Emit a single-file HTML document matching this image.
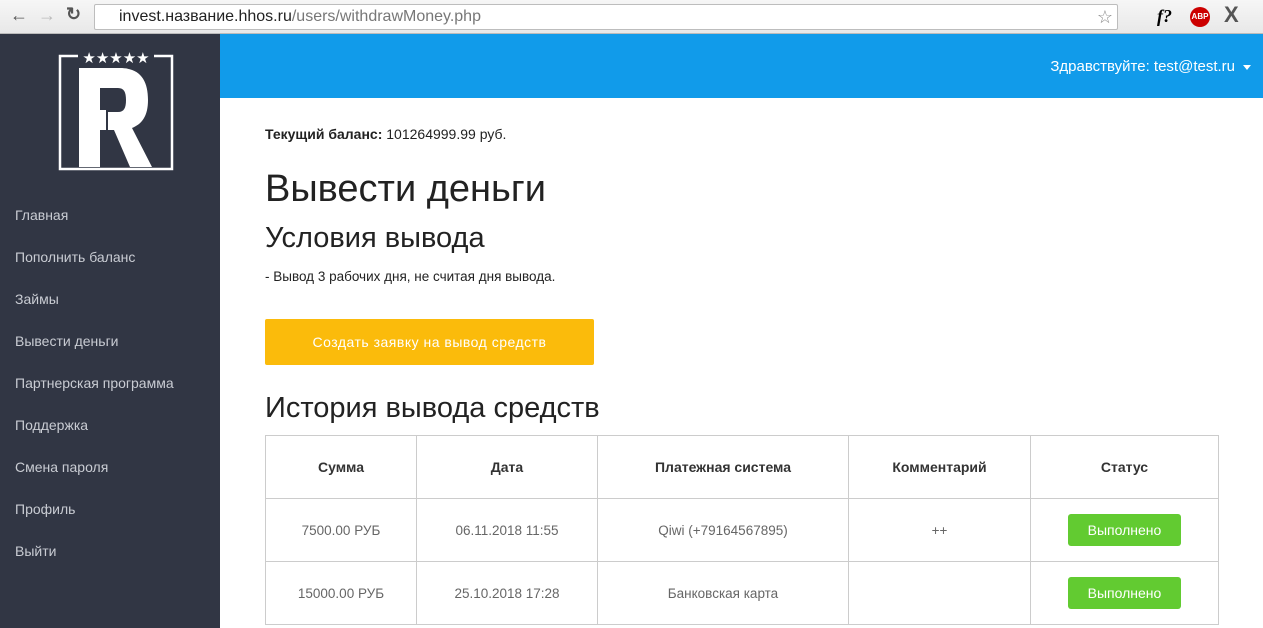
<!DOCTYPE html><html><head><meta charset="utf-8"><style>
*{margin:0;padding:0;box-sizing:border-box}
body{width:1263px;height:628px;overflow:hidden;font-family:"Liberation Sans",sans-serif;background:#fff;position:relative}
.bar{position:absolute;left:0;top:0;width:1263px;height:34px;background:linear-gradient(#f6f6f6,#e8e8e8);border-bottom:1px solid #bbb}
.url{position:absolute;left:94px;top:4px;width:1024px;height:26px;background:#fff;border:1px solid #bdbdbd;border-radius:2px;font-size:16px;line-height:24px;padding-left:24px;color:#222}
.url span{color:#777}
.side{position:absolute;left:0;top:34px;width:220px;height:594px;background:#313644}
.side a{position:absolute;left:15px;color:#c9ccd3;font-size:14px;text-decoration:none}
.head{position:absolute;left:220px;top:34px;width:1043px;height:64px;background:#119bea;color:#fff;font-size:15px}
.main{position:absolute;left:265px}
table{position:absolute;left:265px;top:435px;border-collapse:collapse;font-size:13.5px;color:#666}
td,th{border:1px solid #ccc;text-align:center;height:63px}
th{color:#333;font-size:14px}
.btn{display:inline-block;background:#62cb31;color:#fff;border-radius:3px;width:113px;height:32px;line-height:32px;font-size:14px}
</style></head><body>
<div class="bar">
<span style="position:absolute;left:10px;top:5px;font-size:18px;color:#555">←</span>
<span style="position:absolute;left:38px;top:5px;font-size:18px;color:#bbb">→</span>
<span style="position:absolute;left:66px;top:4px;font-size:18px;color:#555;font-weight:bold">↻</span>
<div class="url">invest.название.hhos.ru<span>/users/withdrawMoney.php</span><span style="position:absolute;right:4px;top:0;font-size:18px;color:#888">☆</span></div>
<span style="position:absolute;left:1157px;top:6px;font-size:18px;font-style:italic;font-family:'Liberation Serif';font-weight:bold">f?</span>
<span style="position:absolute;left:1190px;top:7px;width:20px;height:20px;border-radius:50%;background:#c00;color:#fff;font-size:8px;line-height:20px;text-align:center;font-weight:bold">ABP</span>
<span style="position:absolute;left:1224px;top:2px;font-size:22px;color:#555;font-weight:bold">X</span>
</div>
<div class="side">
<svg style="position:absolute;left:58px;top:16px" width="116" height="122" viewBox="0 0 116 122">
<path d="M20 6H2V119H114V6H96" fill="none" stroke="#fff" stroke-width="2.5"/>
<text x="58" y="13" fill="#fff" font-size="15" text-anchor="middle">★★★★★</text>
<path d="M21 18H62C82 18 90 30 90 50C90 66 84 74 74 78L94 117H72L56 80H50V62H60C66 62 68 58 68 50C68 42 66 38 60 38H42V60H48V80H42V117H21Z" fill="#fff"/>
</svg>
<a style="top:173px">Главная</a><a style="top:215px">Пополнить баланс</a><a style="top:257px">Займы</a><a style="top:299px">Вывести деньги</a><a style="top:341px">Партнерская программа</a><a style="top:383px">Поддержка</a><a style="top:425px">Смена пароля</a><a style="top:467px">Профиль</a><a style="top:509px">Выйти</a>
</div>
<div class="head"><span style="position:absolute;right:28px;top:24px">Здравствуйте: test@test.ru</span><span style="position:absolute;right:12px;top:31px;border:4px solid transparent;border-top:5px solid #fff"></span></div>
<div class="main" style="top:126px;font-size:14px;color:#222"><b>Текущий баланс:</b> 101264999.99 руб.</div>
<div class="main" style="top:168px;font-size:38px;color:#222">Вывести деньги</div>
<div class="main" style="top:222px;font-size:29px;color:#222">Условия вывода</div>
<div class="main" style="top:269px;font-size:13.5px;color:#222">- Вывод 3 рабочих дня, не считая дня вывода.</div>
<div class="main" style="top:319px;width:329px;height:46px;background:#fbbb0b;color:#fff;font-size:14px;text-align:center;line-height:46px;border-radius:2px;letter-spacing:.5px">Создать заявку на вывод средств</div>
<div class="main" style="top:392px;font-size:29px;color:#222">История вывода средств</div>
<table>
<tr><th style="width:151px">Сумма</th><th style="width:181px">Дата</th><th style="width:251px">Платежная система</th><th style="width:182px">Комментарий</th><th style="width:188px">Статус</th></tr>
<tr><td>7500.00 РУБ</td><td>06.11.2018 11:55</td><td>Qiwi (+79164567895)</td><td>++</td><td><span class="btn">Выполнено</span></td></tr>
<tr><td>15000.00 РУБ</td><td>25.10.2018 17:28</td><td>Банковская карта</td><td></td><td><span class="btn">Выполнено</span></td></tr>
</table>
</body></html>
